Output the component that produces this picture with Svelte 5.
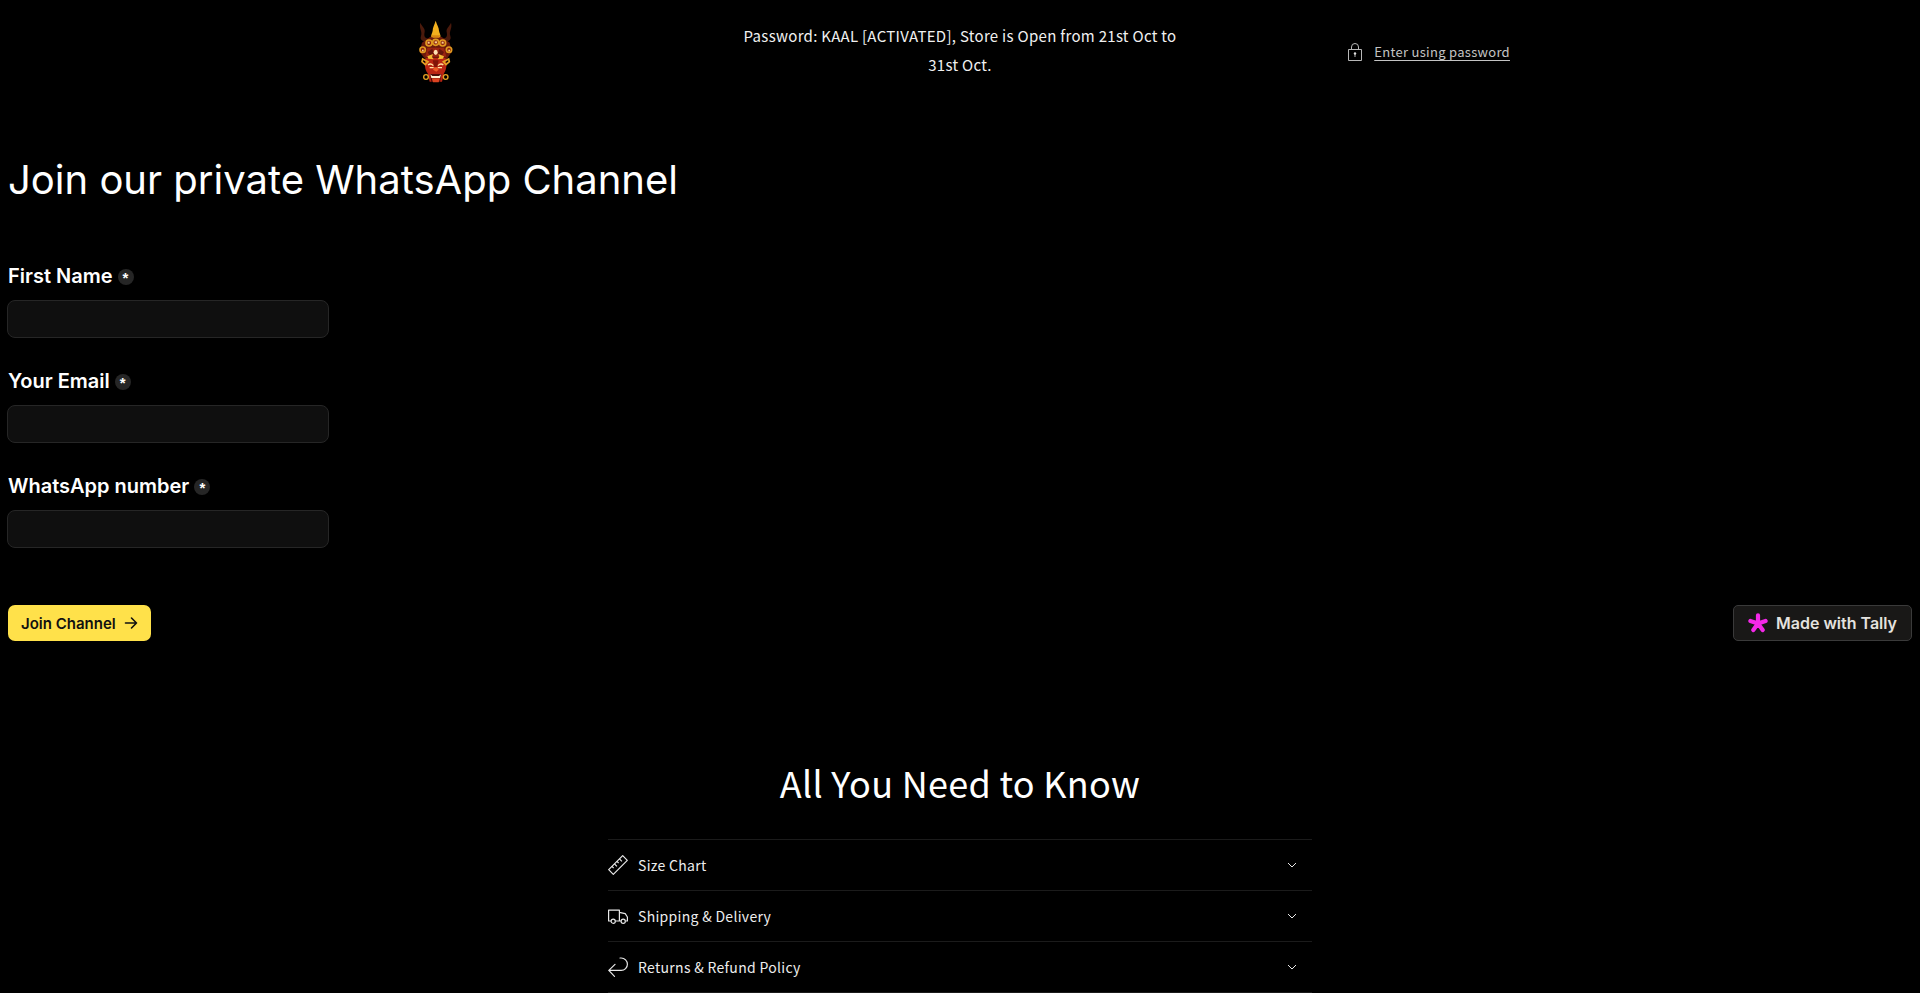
<script lang="ts">
  const fields = [
    { id: 'first-name', label: 'First Name', type: 'text' },
    { id: 'email', label: 'Your Email', type: 'email' },
    { id: 'whatsapp', label: 'WhatsApp number', type: 'tel' },
  ];

  const topics = [
    { icon: 'ruler', title: 'Size Chart' },
    { icon: 'truck', title: 'Shipping & Delivery' },
    { icon: 'return', title: 'Returns & Refund Policy' },
  ];
</script>

<header>
  <div class="header-inner">
    <a class="logo" href="/" aria-label="Home">
      <svg viewBox="30 0 150 240" width="50" height="80">
        <!-- horns -->
        <g fill="#4a1a0c">
          <path d="M61 38C56 56 68 63 63 78C58 90 71 96 84 98L84 86C72 84 72 75 74 66C76 54 66 50 61 38Z" />
          <path d="M153 38C158 56 146 63 151 78C156 90 143 96 130 98L130 86C142 84 142 75 140 66C138 54 148 50 153 38Z" />
        </g>
        <path fill="#6b1a0b" d="M66 98L91 80L124 80L149 98L155 126L140 148L76 148L59 126Z" />
        <!-- flame -->
        <path fill="#f2b01e" d="M107 32C103 45 98 52 98 62C97 70 92 74 94 82L121 82C123 74 118 70 117 62C117 52 111 45 107 32Z" />
        <path fill="#d88712" d="M94 76L121 76L117 83L99 83Z" />
        <!-- crown curls -->
        <g fill="#8f210c" stroke="#e09a20" stroke-width="5">
          <circle cx="87" cy="99" r="9" />
          <circle cx="107" cy="97" r="9" />
          <circle cx="128" cy="99" r="9" />
          <circle cx="68" cy="119" r="8" />
          <circle cx="147" cy="119" r="8" />
        </g>
        <g fill="#f6cf8c">
          <rect x="83" y="95" width="6" height="6" />
          <rect x="104" y="94" width="7" height="6" />
          <rect x="125" y="95" width="6" height="6" />
          <rect x="66" y="119" width="5" height="5" />
          <rect x="145" y="119" width="5" height="5" />
        </g>
        <path fill="#9a2411" d="M82 113L132 113L139 140L76 140Z" />
        <path fill="#65150b" d="M83 126L97 116L101 133L90 139ZM132 126L118 116L114 133L125 139Z" />
        <ellipse cx="107" cy="127" rx="6" ry="8" fill="#ffe3b3" />
        <!-- face -->
        <path fill="#b92513" d="M78 144L136 144C142 158 140 178 132 190L126 215L89 215L83 190C74 178 72 158 78 144Z" />
        <path fill="#801409" d="M98 151L116 151L111 171L103 171Z" />
        <g fill="none" stroke="#e5a224" stroke-width="5">
          <path d="M68 147L84 155L76 164L66 155Z" />
          <path d="M146 147L130 155L138 164L148 155Z" />
          <circle cx="78" cy="201" r="7" stroke-width="4" />
          <circle cx="137" cy="201" r="7" stroke-width="4" />
        </g>
        <path fill="#f4ba35" d="M82 139L99 132L96 141L101 148L85 146ZM132 139L115 132L118 141L113 148L129 146Z" />
        <path fill="none" stroke="#ffe2a2" stroke-width="4" d="M84 165Q92 158 100 167M130 165Q122 158 114 167M89 173L101 173M126 173L113 173" />
        <path fill="#ed5a25" d="M99 179L103 172L111 172L116 179L109 185Z" />
        <path fill="#4e0b07" d="M90 192L124 192L120 216L94 216Z" />
        <path fill="#fff0cf" d="M91 193L97 198L117 198L123 193L120 204L94 204Z" />
        <path fill="#dc4321" d="M95 205L120 205L116 217L99 217Z" />
      </svg>
    </a>
    <p class="message">Password: KAAL [ACTIVATED], Store is Open from 21st Oct to 31st Oct.</p>
    <div class="password">
      <svg viewBox="0 0 14 18" width="14" height="18" fill="none" stroke="#b8b8b8">
        <path d="M.5 6.500h13v11H.5zM3.500 6V4a3.500 3.500 0 0 1 7 0v2" />
        <path d="M7 11v3" />
        <circle cx="7" cy="10.500" r="1.200" fill="#ddd" stroke="none" />
      </svg>
      <a href="#password">Enter using password</a>
    </div>
  </div>
</header>

<main>
  <form>
    <h1>Join our private WhatsApp Channel</h1>
    {#each fields as field}
      <div class="field">
        <div class="label-row">
          <label for={field.id}>{field.label}</label>
          <span class="required">*</span>
        </div>
        <input id={field.id} type={field.type} required />
      </div>
    {/each}
    <div class="actions">
      <button type="submit">
        Join Channel
        <svg viewBox="0 0 14 14" width="14" height="14" fill="none" stroke="currentColor" stroke-width="1.6">
          <path d="M1.500 7h11M7.500 2l5 5-5 5" stroke-linecap="round" stroke-linejoin="round" />
        </svg>
      </button>
      <a class="tally" href="#tally">
        <svg viewBox="0 0 20 20" width="20" height="20" stroke="#f428e8" stroke-width="4.2" stroke-linecap="round">
          <path d="M10 10.500V2.300M10 10.500L2.400 8M10 10.500L17.600 8M10 10.500L5.300 17M10 10.500L14.700 17" />
        </svg>
        Made with Tally
      </a>
    </div>
  </form>

  <section class="faq">
    <h2>All You Need to Know</h2>
    {#each topics as topic}
      <details>
        <summary>
          <svg viewBox="0 0 20 20" width="20" height="20" fill="none" stroke="#e8e8e8" stroke-width="1.2" stroke-linejoin="round">
            {#if topic.icon === 'ruler'}
              <path d="M.7 14.700L14.700.7L19.300 5.300L5.300 19.300Z" />
              <path d="M4 11.400l1.600 1.600M6.500 8.900l2.400 2.400M9 6.400l1.600 1.600M11.500 3.900l2.400 2.400" />
            {:else if topic.icon === 'truck'}
              <path d="M3 15H.6V4.200h10.800V15H7.400M11.400 6.300l5.800 1.300 2.200 3.400V15h-1.900M13 15h-1.600" />
              <circle cx="5.200" cy="15.200" r="2.100" />
              <circle cx="15.200" cy="15.200" r="2.100" />
            {:else}
              <path d="M12 1h1.200a6.200 6.200 0 0 1 0 12.400H.8M7 7.400L.8 13.400L6.500 19.300" stroke-linecap="round" />
            {/if}
          </svg>
          <span>{topic.title}</span>
          <svg class="caret" viewBox="0 0 10 6" width="10" height="6" fill="none" stroke="#e8e8e8">
            <path d="M1 1l4 4 4-4" />
          </svg>
        </summary>
      </details>
    {/each}
  </section>
</main>

<style>
  :global(body) {
    margin: 0;
    background: #000;
    color: #fff;
    font-family: 'Noto Sans CJK SC', 'Open Sans', sans-serif;
    letter-spacing: 0.3px;
  }

  .header-inner {
    display: grid;
    grid-template-columns: 1fr 1.5fr 1fr;
    align-items: center;
    max-width: 1100px;
    margin: 0 auto;
    padding: 10px 50px 12px;
  }

  .logo {
    display: flex;
  }

  .message {
    margin: 0;
    padding: 0 12px;
    text-align: center;
    font-size: 15px;
    line-height: 29px;
    color: #f0f0f0;
  }

  .password {
    display: flex;
    align-items: center;
    justify-content: flex-end;
    gap: 12px;
    padding-top: 4px;
  }

  .password a {
    font-size: 13px;
    line-height: 20px;
    color: #c4c4c4;
    text-underline-offset: 3px;
  }

  form {
    padding: 48px 8px 0;
    font-family: Inter, sans-serif;
    letter-spacing: normal;
  }

  h1 {
    margin: 0 0 54px;
    font-size: 40px;
    font-weight: 400;
    line-height: 60px;
  }

  .field {
    width: 322px;
    max-width: 100%;
    margin: 0 -1px 31px;
  }

  .label-row {
    display: flex;
    align-items: center;
    gap: 5px;
    height: 24px;
    margin: 0 1px 12px;
  }

  label {
    font-size: 20px;
    font-weight: 600;
    line-height: 24px;
  }

  .required {
    width: 16px;
    height: 16px;
    margin-top: 2px;
    border-radius: 50%;
    background: #262626;
    font-family: 'Liberation Sans', sans-serif;
    font-size: 15px;
    font-weight: 600;
    line-height: 18px;
    text-align: center;
  }

  input {
    display: block;
    box-sizing: border-box;
    width: 100%;
    height: 38px;
    padding: 0 10px;
    border: 1px solid #262626;
    border-radius: 8px;
    background: #0f0f0f;
    color: #fff;
    font: inherit;
  }

  .actions {
    display: flex;
    align-items: center;
    justify-content: space-between;
    margin-top: 57px;
  }

  button,
  .tally {
    display: flex;
    align-items: center;
    box-sizing: border-box;
    height: 36px;
    gap: 8px;
    padding: 0 13px;
    border: 0;
    border-radius: 7px;
    background: #ffe14a;
    color: #111;
    font-family: inherit;
    font-size: 15px;
    font-weight: 600;
  }

  .tally {
    padding: 0 14px;
    border: 1px solid #3a3a3a;
    border-radius: 5px;
    background: #191817;
    color: #e4e2df;
    font-size: 16px;
    text-decoration: none;
  }

  .faq {
    max-width: 704px;
    margin: 114px auto 0;
  }

  h2 {
    margin: 0 0 30px;
    text-align: center;
    font-size: 36px;
    font-weight: 400;
    line-height: 54px;
  }

  details {
    border-top: 1px solid #1b1b1b;
  }

  details:last-child {
    border-bottom: 1px solid #1b1b1b;
  }

  summary {
    display: flex;
    align-items: center;
    gap: 10px;
    height: 50px;
    padding-right: 15px;
    list-style: none;
    font-size: 14px;
    color: #ededed;
    cursor: pointer;
  }

  .caret {
    margin-left: auto;
  }
</style>
